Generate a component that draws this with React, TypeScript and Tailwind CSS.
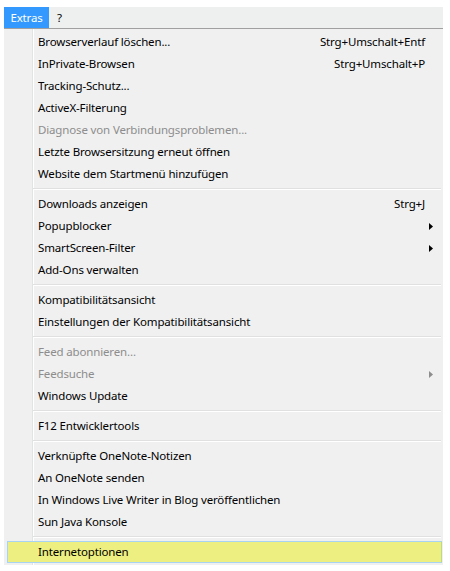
import React from "react";

type Item = {
  label: string;
  shortcut?: string;
  arrow?: boolean;
  disabled?: boolean;
  hover?: boolean;
};

const groups: Item[][] = [
  [
    { label: "Browserverlauf löschen...", shortcut: "Strg+Umschalt+Entf" },
    { label: "InPrivate-Browsen", shortcut: "Strg+Umschalt+P" },
    { label: "Tracking-Schutz..." },
    { label: "ActiveX-Filterung" },
    { label: "Diagnose von Verbindungsproblemen...", disabled: true },
    { label: "Letzte Browsersitzung erneut öffnen" },
    { label: "Website dem Startmenü hinzufügen" },
  ],
  [
    { label: "Downloads anzeigen", shortcut: "Strg+J" },
    { label: "Popupblocker", arrow: true },
    { label: "SmartScreen-Filter", arrow: true },
    { label: "Add-Ons verwalten" },
  ],
  [
    { label: "Kompatibilitätsansicht" },
    { label: "Einstellungen der Kompatibilitätsansicht" },
  ],
  [
    { label: "Feed abonnieren...", disabled: true },
    { label: "Feedsuche", arrow: true, disabled: true },
    { label: "Windows Update" },
  ],
  [{ label: "F12 Entwicklertools" }],
  [
    { label: "Verknüpfte OneNote-Notizen" },
    { label: "An OneNote senden" },
    { label: "In Windows Live Writer in Blog veröffentlichen" },
    { label: "Sun Java Konsole" },
  ],
  [{ label: "Internetoptionen", hover: true }],
];

function Arrow({ disabled }: { disabled?: boolean }) {
  return (
    <svg width="4" height="7" viewBox="0 0 4 7" className="block">
      <path d="M0 0 L4 3.5 L0 7 Z" fill={disabled ? "#8d8d8d" : "#000"} />
    </svg>
  );
}

function Row({ item }: { item: Item }) {
  const color = item.disabled ? "text-[#8d8d8d]" : "text-black";
  if (item.hover) {
    return (
      <div className="ml-[3px] mr-[1px] flex h-[22px] items-center border border-[#a9d3f3] border-r-[#b9dc8a] bg-[#edef80] pl-[30px]">
        <span className={color}>{item.label}</span>
      </div>
    );
  }
  return (
    <div className={`flex h-[22px] items-center pl-[34px] ${color}`}>
      <span className="flex-1">{item.label}</span>
      {item.shortcut && <span className="pr-[18px]">{item.shortcut}</span>}
      {item.arrow && (
        <span className="pr-[10px]">
          <Arrow disabled={item.disabled} />
        </span>
      )}
    </div>
  );
}

function Separator() {
  return (
    <div className="flex h-[8px] flex-col justify-center pl-[29px] pr-[2px]">
      <div className="h-[1px] bg-[#e0e0e0]" />
      <div className="h-[1px] bg-white" />
    </div>
  );
}

export default function App() {
  return (
    <div
      className="min-h-[571px] bg-white pl-[4px] pt-[7px] text-[11.5px] leading-none tracking-[-0.15px]"
      style={{ fontFamily: '"Segoe UI", "Noto Sans", "Open Sans", sans-serif' }}
    >
      <div className="w-[439px]">
        <div className="flex h-[22px] border-b border-[#a0a0a0] bg-[#eef0ef]">
          <div className="flex w-[45px] items-center justify-center bg-[#3399ff] text-white">
            Extras
          </div>
          <div className="flex items-center pl-[8px] text-black">?</div>
        </div>
        <div className="bg-[linear-gradient(to_right,#f0f0f0_28px,#e2e3e3_28px,#e2e3e3_29px,#ffffff_29px,#ffffff_30px,#f0f0f0_30px)] py-[2px]">
          {groups.map((g, gi) => (
            <React.Fragment key={gi}>
              {gi > 0 && <Separator />}
              {g.map((it, ii) => (
                <Row key={ii} item={it} />
              ))}
            </React.Fragment>
          ))}
        </div>
      </div>
    </div>
  );
}
